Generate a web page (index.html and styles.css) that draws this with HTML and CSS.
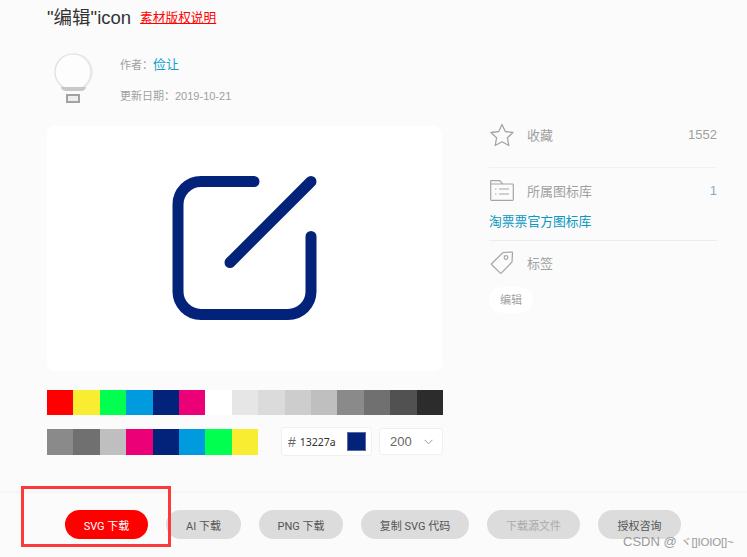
FILE: index.html
```html
<!DOCTYPE html>
<html lang="en">
<head>
    <title>"编辑"icon</title>
    <link rel="stylesheet" href="styles.css">
</head>
<body>
    <div class="content">
        <div class="title-row">
            <h1>"编辑"icon</h1>
            <a class="copyright" href="#">素材版权说明</a>
        </div>
        <div class="author">
            <svg class="avatar" width="44" height="52" viewBox="0 0 44 52">
                <circle cx="21" cy="20" r="18" fill="#fdfdfd" stroke="#dedede" stroke-width="1.2"/>
                <path d="M29 3.500a18 18 0 0 1 0 33" fill="none" stroke="#e8e8e8" stroke-width="2"/>
                <path d="M9 35h25c0 2-2 4-5 4H14c-3 0-5-2-5-4z" fill="#c8c8c8"/>
                <rect x="15" y="43" width="12" height="7" fill="#eee" stroke="#a2a2a2" stroke-width="2"/>
            </svg>
            <div class="author-info">
                <div class="author-name">作者：<a href="#">俭让</a></div>
                <div class="author-date">更新日期：2019-10-21</div>
            </div>
        </div>
        <div class="columns">
            <div class="left">
                <div class="preview">
                    <svg width="395" height="245" viewBox="0 0 395 245">
                        <path d="M207 55.500H154a23 23 0 0 0-23 23v87a23 23 0 0 0 23 23h87a23 23 0 0 0 23-23v-55M264 55.500l-81 81" fill="none" stroke="#03227a" stroke-width="11" stroke-linecap="round"/>
                    </svg>
                </div>
                <div class="palette">
                    <span style="background:#ff0000"></span>
                    <span style="background:#f9ed32"></span>
                    <span style="background:#00ff4f"></span>
                    <span style="background:#009bdf"></span>
                    <span style="background:#03227a"></span>
                    <span style="background:#ec0078"></span>
                    <span style="background:#ffffff"></span>
                    <span style="background:#e6e6e6"></span>
                    <span style="background:#dbdbdb"></span>
                    <span style="background:#cdcdcd"></span>
                    <span style="background:#bfbfbf"></span>
                    <span style="background:#8a8a8a"></span>
                    <span style="background:#707070"></span>
                    <span style="background:#515151"></span>
                    <span style="background:#2c2c2c"></span>
                </div>
                <div class="tools">
                    <div class="used">
                        <span style="background:#8a8a8a"></span>
                        <span style="background:#707070"></span>
                        <span style="background:#bfbfbf"></span>
                        <span style="background:#ec0078"></span>
                        <span style="background:#03227a"></span>
                        <span style="background:#009bdf"></span>
                        <span style="background:#00ff4f"></span>
                        <span style="background:#f9ed32"></span>
                    </div>
                    <div class="hex-box">
                        <span class="hash">#</span>
                        <span class="hex">13227a</span>
                        <span class="hex-color"></span>
                    </div>
                    <div class="size-box">
                        <span>200</span>
                        <svg width="9" height="6" viewBox="0 0 9 6"><path d="M.5.800l4 4 4-4" fill="none" stroke="#999"/></svg>
                    </div>
                </div>
            </div>
            <div class="side">
                <div class="side-row first">
                    <svg width="25" height="24" viewBox="0 0 25 24"><path d="M12.500 1.500l3.300 7 7.700 1-5.600 5.300 1.400 7.700-6.800-3.700-6.800 3.700 1.400-7.700L1.500 9.500l7.700-1z" fill="none" stroke="#a5a5a5" stroke-width="1.300" stroke-linejoin="round"/></svg>
                    <span class="side-label">收藏</span>
                    <span class="side-num">1552</span>
                </div>
                <div class="side-row library">
                    <svg width="24" height="21" viewBox="0 0 24 21"><path d="M.7 19.500V1.200c0-.3.2-.5.5-.5h8.500l3 3.300h9.800c.5 0 .8.300.8.800v14.700c0 .5-.3.800-.8.800H1.500c-.5 0-.8-.3-.8-.8zM.7 4h12M5 9h1.500M9 9h10M5 14h1.500M9 14h10" fill="none" stroke="#a5a5a5" stroke-width="1.200"/></svg>
                    <span class="side-label">所属图标库</span>
                    <span class="side-num blue">1</span>
                </div>
                <a class="library-link" href="#">淘票票官方图标库</a>
                <div class="side-row tag-row">
                    <svg width="23" height="23" viewBox="0 0 23 23"><path d="M1.300 12.500L12.500 1.500l8.700-.5c.5 0 .8.300.8.800l-.5 9.200L11 21.800c-.5.500-1 .5-1.500 0l-8.200-8c-.4-.4-.4-.9 0-1.300z" fill="none" stroke="#a5a5a5" stroke-width="1.200"/><circle cx="15.500" cy="6.500" r="1.800" fill="none" stroke="#a5a5a5" stroke-width="1.200"/></svg>
                    <span class="side-label">标签</span>
                </div>
                <span class="tag">编辑</span>
            </div>
        </div>
    </div>
    <div class="actions">
        <button class="primary">SVG 下载</button>
        <button>AI 下载</button>
        <button>PNG 下载</button>
        <button>复制 SVG 代码</button>
        <button class="disabled">下载源文件</button>
        <button>授权咨询</button>
    </div>
    <div class="highlight"></div>
    <div class="watermark">CSDN @ <span>ヾ[]IOIO[]~</span></div>
</body>
</html>
```

FILE: styles.css
```css
body {
    margin: 0;
    height: 557px;
    overflow: hidden;
    position: relative;
    background-color: #fbfbfb;
    font-family: "Liberation Sans", "Noto Sans CJK SC", sans-serif;
    color: #a0a0a0;
}
a {
    text-decoration: none;
}
.content {
    padding: 4px 30px 0 47px;
    height: 487px;
}
.title-row {
    display: flex;
    align-items: center;
    height: 24px;
}
h1 {
    margin: 0;
    font-size: 18.5px;
    font-weight: normal;
    color: #333;
}
.copyright {
    margin-left: 9px;
    font-size: 12.7px;
    color: #ff0000;
    text-decoration: underline;
}
.author {
    display: flex;
    margin-top: 24px;
    padding-left: 5px;
}
.author-info {
    margin-left: 24px;
    font-size: 11px;
}
.author-name {
    margin-top: 4px;
    line-height: 18px;
}
.author-name a {
    font-size: 13px;
    color: #0e9fce;
}
.author-date {
    margin-top: 14px;
    line-height: 16px;
}
.columns {
    display: flex;
    margin-top: 22px;
}
.left {
    width: 396px;
}
.preview {
    width: 395px;
    height: 245px;
    background-color: #fff;
    border-radius: 8px;
}
.preview svg {
    display: block;
}
.palette {
    display: grid;
    grid-template-columns: repeat(15, 1fr);
    height: 25px;
    margin-top: 19px;
}
.tools {
    display: flex;
    align-items: center;
    margin-top: 12px;
}
.used {
    display: grid;
    grid-template-columns: repeat(8, 1fr);
    width: 211px;
    height: 26px;
}
.hex-box {
    display: flex;
    align-items: center;
    width: 91px;
    height: 29px;
    box-sizing: border-box;
    margin-left: 23px;
    padding: 0 5px 0 6px;
    background-color: #fff;
    border: 1px solid #f0f0f0;
    border-radius: 3px;
}
.hash {
    font-size: 14px;
    color: #666;
}
.hex {
    margin-left: 4px;
    font-family: "Noto Sans", sans-serif;
    font-size: 10.5px;
    color: #333;
}
.hex-color {
    width: 19px;
    height: 19px;
    box-sizing: border-box;
    margin-left: auto;
    background-color: #03227a;
    border: 1px solid #5a68a8;
}
.size-box {
    display: flex;
    align-items: center;
    justify-content: space-between;
    width: 64px;
    height: 27px;
    box-sizing: border-box;
    margin-left: 7px;
    padding: 0 9px 0 10px;
    background-color: #fff;
    border: 1px solid #f0f0f0;
    border-radius: 3px;
    font-size: 13px;
    color: #666;
}
.side {
    width: 228px;
    margin-left: 46px;
}
.side-row {
    display: flex;
    align-items: center;
    height: 25px;
}
.side-row svg {
    flex: none;
    width: 26px;
}
.side-row.first {
    padding-bottom: 20px;
    border-bottom: 1px solid #f1f1f1;
    margin-bottom: 10px;
    margin-top: -4px;
}
.side-label {
    margin-left: 12px;
    font-size: 13px;
}
.side-num {
    margin-left: auto;
    font-size: 13px;
}
.side-num.blue {
    color: #8aa9bf;
}
.library-link {
    display: block;
    padding: 10px 0 9px;
    line-height: 18px;
    border-bottom: 1px solid #ececec;
    font-size: 12.8px;
    color: #0a97c0;
}
.tag-row {
    margin-top: 9px;
}
.tag {
    display: inline-block;
    width: 44px;
    margin: 12px 0 0 0;
    line-height: 26px;
    text-align: center;
    font-size: 11px;
    background-color: #fff;
    border-radius: 13px;
}
.actions {
    display: grid;
    grid-template-columns: 83px 75px 84px 108px 93px 83px;
    gap: 18px;
    height: 66px;
    padding: 17px 0 0 65px;
    box-sizing: border-box;
    border-top: 2px solid #f5f5f5;
}
button {
    height: 29px;
    padding: 0;
    border: none;
    border-radius: 15px;
    background-color: #dcdcdc;
    font-family: Roboto, "Noto Sans CJK SC", sans-serif;
    font-size: 11px;
    white-space: nowrap;
    color: #555;
}
button.primary {
    background-color: #ff0000;
    color: #fff;
}
button.disabled {
    color: #aaa;
}
.highlight {
    position: absolute;
    left: 21px;
    top: 486px;
    width: 144px;
    height: 55px;
    border: 3px solid #fb3a3a;
}
.watermark {
    position: absolute;
    left: 623px;
    top: 534px;
    font-size: 13px;
    line-height: 15px;
    color: #9a9a9a;
    white-space: nowrap;
}
.watermark span {
    font-size: 11.5px;
    letter-spacing: -0.2px;
}
```
